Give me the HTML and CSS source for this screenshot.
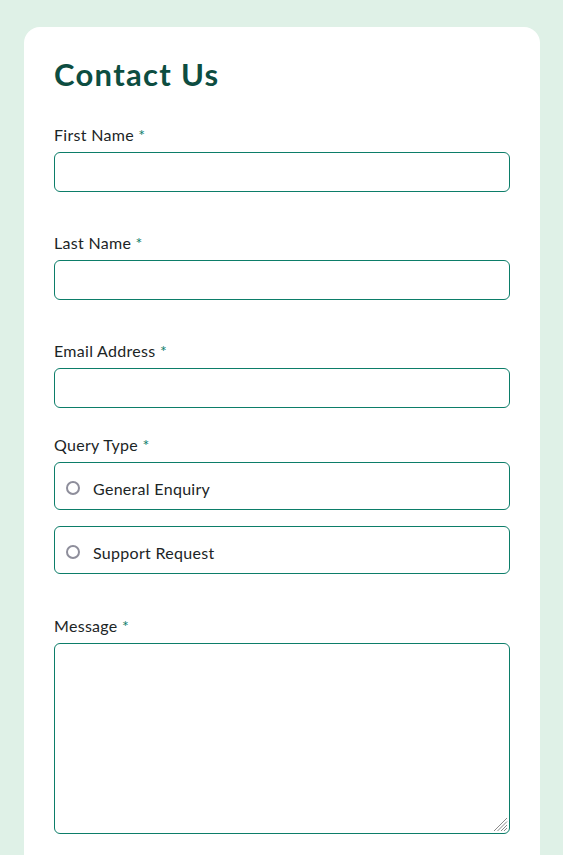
FILE: index.html
```html
<!DOCTYPE html>
<html lang="en">
<head>
<meta charset="utf-8">
<title>Contact Us</title>
<link rel="stylesheet" href="styles.css">
</head>
<body>
<main class="card">
  <h1 class="title">Contact Us</h1>
  <form class="form">
    <div class="field field-name">
      <label class="label" for="first">First Name <span class="req">*</span></label>
      <input class="input" id="first" type="text">
    </div>
    <div class="field field-name">
      <label class="label" for="last">Last Name <span class="req">*</span></label>
      <input class="input" id="last" type="text">
    </div>
    <div class="field field-email">
      <label class="label" for="email">Email Address <span class="req">*</span></label>
      <input class="input" id="email" type="email">
    </div>
    <div class="field field-query">
      <span class="label">Query Type <span class="req">*</span></span>
      <div class="options">
        <label class="option"><span class="radio"></span><span>General Enquiry</span></label>
        <label class="option"><span class="radio"></span><span>Support Request</span></label>
      </div>
    </div>
    <div class="field field-message">
      <label class="label" for="msg">Message <span class="req">*</span></label>
      <div class="textarea-wrap">
        <textarea class="textarea" id="msg"></textarea>
        <svg class="grip" width="15" height="15" viewBox="0 0 15 15" aria-hidden="true">
          <path d="M14 1 L1 14 M14 4.5 L4.5 14 M14 8 L8 14 M14 11 L11 14" stroke="#8a8a8a" stroke-width="1" fill="none"/>
        </svg>
      </div>
    </div>
  </form>
</main>
</body>
</html>
```
FILE: styles.css
```css
* { box-sizing: border-box; }
html, body { margin: 0; height: 100%; }
body {
  background: #dff1e7;
  padding: 27px 23px 0 24px;
  font-family: "Lato", "Liberation Sans", sans-serif;
  color: #1c2526;
  overflow: hidden;
}
.card {
  width: 516px;
  background: #fff;
  border-radius: 16px 16px 0 0;
  padding: 32px 30px 40px;
  min-height: 900px;
}
.title {
  margin: 0 0 35px;
  font-size: 31px;
  line-height: 1;
  font-weight: 700;
  color: #0d4d41;
  letter-spacing: 1.3px;
}
.form { display: flex; flex-direction: column; }
.field { display: flex; flex-direction: column; gap: 7px; }
.field-name { margin-bottom: 41px; }
.field-email { margin-bottom: 27px; }
.field-query { margin-bottom: 42px; }
.label {
  font-size: 16px;
  line-height: 20px;
  letter-spacing: 0.3px;
}
.req { color: #0c7d69; }
.input {
  height: 40px;
  border: 1px solid #0c7d69;
  border-radius: 6px;
  font: inherit;
  background: #fff;
}
.options { display: flex; flex-direction: column; gap: 16px; }
.option {
  height: 48px;
  border: 1px solid #0c7d69;
  border-radius: 6px;
  display: flex;
  align-items: center;
  padding: 4px 0 0 11px;
  gap: 13px;
  font-size: 16px;
  letter-spacing: 0.3px;
}
.radio {
  width: 14px;
  height: 14px;
  border: 2px solid #8e8e9b;
  border-radius: 50%;
  flex: none;
}
.textarea-wrap { position: relative; display: flex; }
.textarea {
  width: 100%;
  height: 191px;
  border: 1px solid #0c7d69;
  border-radius: 6px;
  font: inherit;
  resize: none;
}
.grip {
  position: absolute;
  right: 2px;
  bottom: 2px;
}
```
